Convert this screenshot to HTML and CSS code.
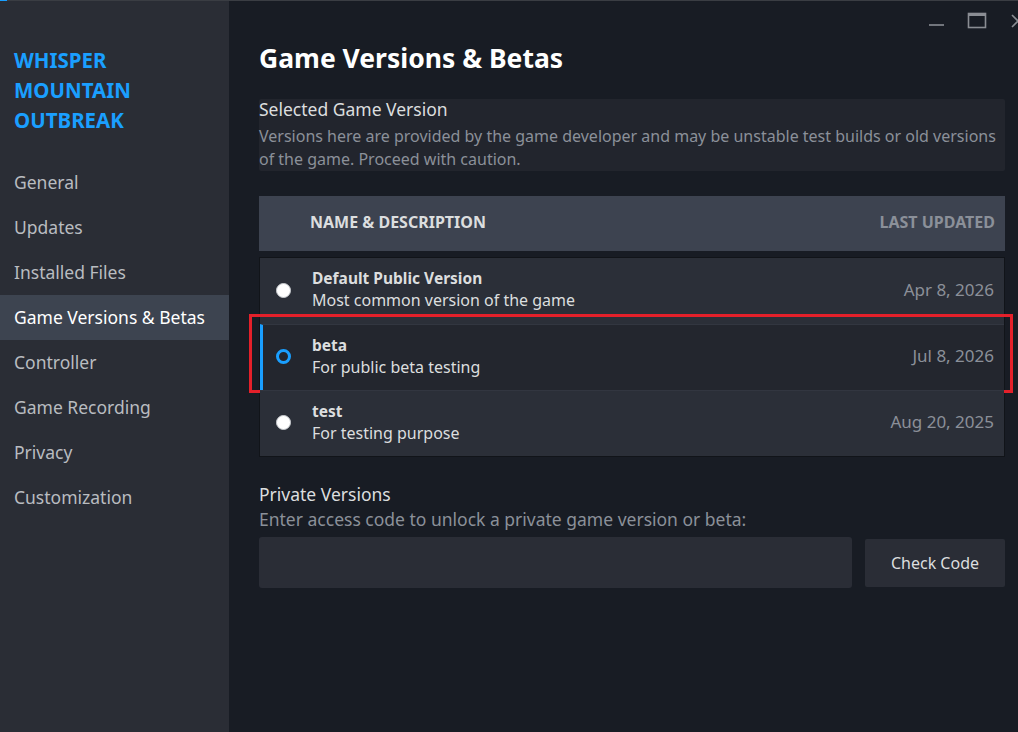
FILE: index.html
```html
<!DOCTYPE html>
<html lang="en">
<head>
<meta charset="utf-8">
<title>Game Versions &amp; Betas</title>
<link rel="stylesheet" href="styles.css">
</head>
<body>
<div class="window">
  <aside class="sidebar">
    <h1 class="game-title">WHISPER<br>MOUNTAIN<br>OUTBREAK</h1>
    <nav class="nav">
      <div class="nav-item">General</div>
      <div class="nav-item">Updates</div>
      <div class="nav-item">Installed Files</div>
      <div class="nav-item active">Game Versions &amp; Betas</div>
      <div class="nav-item">Controller</div>
      <div class="nav-item">Game Recording</div>
      <div class="nav-item">Privacy</div>
      <div class="nav-item">Customization</div>
    </nav>
  </aside>
  <main class="main">
    <div class="controls">
      <span class="ctl ctl-min"><svg width="16" height="16" viewBox="0 0 16 16"><line x1="1" y1="9" x2="16" y2="9" stroke="#8a8d93" stroke-width="1.6"/></svg></span>
      <span class="ctl ctl-max"><svg width="20" height="18" viewBox="0 0 20 18"><rect x="1.5" y="1.5" width="17" height="14" fill="none" stroke="#8a8d93" stroke-width="1.6"/><line x1="1.5" y1="3" x2="18.5" y2="3" stroke="#8a8d93" stroke-width="2"/></svg></span>
      <span class="ctl ctl-close"><svg width="16" height="16" viewBox="0 0 16 16"><path d="M2 2 L14 14 M14 2 L2 14" stroke="#8a8d93" stroke-width="1.6"/></svg></span>
    </div>
    <h2 class="page-title">Game Versions &amp; Betas</h2>

    <section class="selected-box">
      <div class="sec-heading">Selected Game Version</div>
      <p class="sec-desc">Versions here are provided by the game developer and may be unstable test builds or old versions of the game. Proceed with caution.</p>
    </section>

    <div class="table-head">
      <span class="th-name">NAME &amp; DESCRIPTION</span>
      <span class="th-date">LAST UPDATED</span>
    </div>

    <div class="rows">
      <div class="row">
        <span class="radio"></span>
        <div class="row-text">
          <div class="row-name">Default Public Version</div>
          <div class="row-desc">Most common version of the game</div>
        </div>
        <span class="row-date">Apr 8, 2026</span>
      </div>
      <div class="row selected">
        <span class="radio checked"></span>
        <div class="row-text">
          <div class="row-name">beta</div>
          <div class="row-desc">For public beta testing</div>
        </div>
        <span class="row-date">Jul 8, 2026</span>
        <span class="highlight"></span>
      </div>
      <div class="row">
        <span class="radio"></span>
        <div class="row-text">
          <div class="row-name">test</div>
          <div class="row-desc">For testing purpose</div>
        </div>
        <span class="row-date">Aug 20, 2025</span>
      </div>
    </div>

    <section class="private">
      <div class="sec-heading">Private Versions</div>
      <div class="private-desc">Enter access code to unlock a private game version or beta:</div>
      <div class="code-row">
        <div class="code-input"></div>
        <button class="check-btn">Check Code</button>
      </div>
    </section>
  </main>
</div>
</body>
</html>
```

FILE: styles.css
```css
* { box-sizing: border-box; }

html, body {
  margin: 0;
  padding: 0;
  width: 1018px;
  height: 732px;
  overflow: hidden;
  background: #181c24;
  font-family: "Noto Sans", "Open Sans", sans-serif;
}

.window {
  position: relative;
  display: flex;
  width: 1018px;
  height: 732px;
  border-top: 1px solid #3a3d43;
}

.window::before {
  content: "";
  position: absolute;
  left: 0;
  top: -1px;
  width: 7px;
  height: 1px;
  background: #1a9fff;
}

/* Sidebar */
.sidebar {
  width: 229px;
  flex: none;
  background: #2a2d35;
  padding-top: 44px;
}

.game-title {
  margin: 0 0 25px 14px;
  font-size: 20.5px;
  line-height: 30px;
  font-weight: 700;
  color: #1a9fff;
}

.nav {
  display: flex;
  flex-direction: column;
}

.nav-item {
  height: 45px;
  line-height: 45px;
  padding-left: 14px;
  font-size: 17.5px;
  color: #b9bcc0;
}

.nav-item.active {
  background: #3d4450;
  color: #ffffff;
}

/* Main */
.main {
  flex: 1;
  min-width: 0;
  padding: 0 13px 0 30px;
  color: #dcdedf;
}

.controls {
  height: 40px;
  display: flex;
  justify-content: flex-end;
  align-items: flex-start;
  gap: 23px;
  margin-right: -21px;
  padding-top: 11px;
}

.ctl { display: block; height: 18px; }
.ctl-min { margin-top: 3px; }

.page-title {
  margin: 0 0 24px;
  font-size: 26.5px;
  line-height: 34px;
  font-weight: 700;
  color: #ffffff;
}

.selected-box {
  background: #22252d;
  border-radius: 2px;
}

.sec-heading {
  font-size: 17.5px;
  line-height: 20px;
  color: #dcdedf;
}

.sec-desc {
  margin: 6px 0 0;
  font-size: 16px;
  line-height: 23px;
  color: #8b9099;
}

.table-head {
  margin-top: 25px;
  height: 55px;
  background: #3d4350;
  display: flex;
  align-items: center;
  justify-content: space-between;
  padding: 0 10px 3px 51px;
  font-size: 16px;
  font-weight: 700;
}

.th-name { color: #dcdedf; }
.th-date { color: #8b9099; }

.rows {
  margin-top: 6px;
  border: 1px solid #111419;
  background: #2b2f38;
}

.row {
  position: relative;
  height: 66px;
  display: flex;
  align-items: center;
  padding: 0 10px 0 16px;
  background: #2b2f38;
}

.row + .row { border-top: 1px solid #323640; }

.row.selected {
  background: #23262e;
  border-left: 3px solid #1a9fff;
  padding-left: 13px;
}

.radio {
  width: 15px;
  height: 15px;
  flex: none;
  border-radius: 50%;
  background: #ffffff;
  border: 1px solid #c9ccd0;
  margin-right: 21px;
  margin-bottom: 2px;
}

.radio.checked {
  background: #23262e;
  border: 3px solid #1a9fff;
}

.row-text {
  flex: 1;
  padding-bottom: 3px;
}

.row-name {
  font-size: 15.5px;
  line-height: 22px;
  font-weight: 700;
  color: #dcdedf;
}

.row-desc {
  font-size: 16px;
  line-height: 23px;
  color: #dcdedf;
}

.row-date {
  font-size: 17px;
  color: #8b9099;
  margin-bottom: 4px;
}

.highlight {
  position: absolute;
  left: -14px;
  right: -9px;
  top: -11px;
  bottom: -3px;
  border: 3px solid #e4202a;
  pointer-events: none;
}

.private {
  margin-top: 27px;
}

.private-desc {
  margin-top: 5px;
  font-size: 17.5px;
  line-height: 20px;
  color: #8b9099;
}

.code-row {
  margin-top: 8px;
  display: flex;
  align-items: center;
  gap: 13px;
}

.code-input {
  flex: 1;
  height: 51px;
  background: #2a2d36;
  border-radius: 3px;
}

.check-btn {
  width: 140px;
  height: 48px;
  border: none;
  border-radius: 2px;
  background: #2a2d36;
  color: #dcdedf;
  font-family: "Noto Sans", "Open Sans", sans-serif;
  font-size: 16px;
}
```
